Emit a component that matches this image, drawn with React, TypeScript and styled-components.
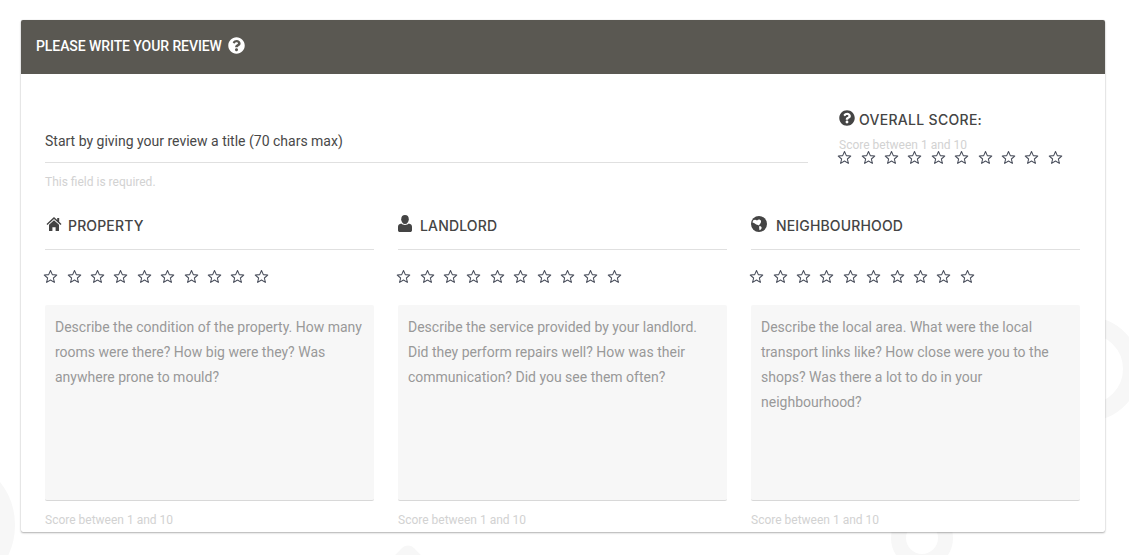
import React from 'react';
import styled, { createGlobalStyle } from 'styled-components';
import { FaQuestionCircle } from 'react-icons/fa';

const GlobalStyle = createGlobalStyle`
  html, body {
    margin: 0;
    padding: 0;
    background: #fff;
  }
  body {
    font-family: Roboto, "Liberation Sans", sans-serif;
    overflow: hidden;
  }
`;

const HomeIcon = () => (
  <svg width="16" height="14" viewBox="0 0 16 14" fill="#444">
    <path d="M8 0L.5 6.900l.9 1L8 1.900l6.600 6 .9-1L13.200 4.800V1h-2v1.900z" />
    <path d="M8 3.200l5 4.500V14H9.600v-3.800H6.400V14H3V7.700z" />
  </svg>
);

const UserIcon = () => (
  <svg width="14" height="17" viewBox="0 0 14 17" fill="#444">
    <path d="M7 0c2.400 0 3.800 1.600 3.800 4.200S9.300 9 7 9 3.200 6.800 3.200 4.200 4.600 0 7 0z" />
    <path d="M3.300 8.600C4.300 9.600 5.500 10 7 10s2.700-.4 3.700-1.400c2 .4 3.300 1.300 3.300 3.200v3.400c0 1-.8 1.800-1.800 1.800H1.800C.8 17 0 16.200 0 15.200v-3.400c0-1.900 1.300-2.800 3.300-3.200z" />
  </svg>
);

const GlobeIcon = () => (
  <svg width="16" height="16" viewBox="0 0 16 16">
    <circle cx="8" cy="8" r="8" fill="#444" />
    <path
      d="M2 4.500C3.500 3.500 5 3.800 6 4.500 7.500 3 9.500 3.500 10 5c.5 2-1.500 3-2 4.500C6.500 8.800 5.500 9 4.500 8c-1-1-2-1-3-1.500zM8.500 10c1.500 0 2.500 1 2 2.500-.5 1-1.500 2-2 1.500-.5-1 0-2-.5-3z"
      fill="#fff"
    />
  </svg>
);

const sections = [
  {
    key: 'property',
    title: 'PROPERTY',
    icon: <HomeIcon />,
    gap: 6,
    indent: 1,
    text: 'Describe the condition of the property. How many rooms were there? How big were they? Was anywhere prone to mould?',
  },
  {
    key: 'landlord',
    title: 'LANDLORD',
    icon: <UserIcon />,
    gap: 8,
    indent: 0,
    text: 'Describe the service provided by your landlord. Did they perform repairs well? How was their communication? Did you see them often?',
  },
  {
    key: 'neighbourhood',
    title: 'NEIGHBOURHOOD',
    icon: <GlobeIcon />,
    gap: 9,
    indent: 0,
    text: 'Describe the local area. What were the local transport links like? How close were you to the shops? Was there a lot to do in your neighbourhood?',
  },
];

const Stars = () => (
  <StarRow>
    {Array.from({ length: 10 }, (_, i) => (
      <svg key={i} width="15" height="15" viewBox="0 0 24 24">
        <path
          d="M12 2.500l2.900 6.500 7.100.7-5.400 4.700 1.600 7-6.200-3.700-6.200 3.700 1.600-7L2 9.700 9.100 9z"
          fill="none"
          stroke="#4a4f5c"
          strokeWidth="1.700"
          strokeLinejoin="round"
        />
      </svg>
    ))}
  </StarRow>
);

export default function App() {
  return (
    <Page>
      <GlobalStyle />
      <Ring $size={104} $width={17} $left={1036} $top={317} />
      <Ring $size={62} $width={15} $left={891} $top={507} />
      <Ring $size={138} $width={40} $left={-123} $top={456} />
      <Blob />
      <Card>
        <Header>
          PLEASE WRITE YOUR REVIEW
          <FaQuestionCircle size={17} />
        </Header>
        <Body>
          <TopRow>
            <TitleField>
              <TitleInput>Start by giving your review a title (70 chars max)</TitleInput>
              <Hint>This field is required.</Hint>
            </TitleField>
            <Overall>
              <OverallHeading>
                <FaQuestionCircle size={16} />
                OVERALL SCORE:
              </OverallHeading>
              <OverallHint>Score between 1 and 10</OverallHint>
              <Stars />
            </Overall>
          </TopRow>
          <Columns>
            {sections.map((s) => (
              <Column key={s.key}>
                <SectionHeading $gap={s.gap} $indent={s.indent}>
                  {s.icon}
                  {s.title}
                </SectionHeading>
                <Stars />
                <TextBox>{s.text}</TextBox>
                <Hint>Score between 1 and 10</Hint>
              </Column>
            ))}
          </Columns>
        </Body>
      </Card>
    </Page>
  );
}

const Page = styled.div`
  position: relative;
  width: 1129px;
  height: 555px;
  padding: 20px 24px 0 21px;
  box-sizing: border-box;
  overflow: hidden;
  background: #fff;
`;

const Ring = styled.div<{ $size: number; $width: number; $left: number; $top: number }>`
  position: absolute;
  left: ${(p) => p.$left}px;
  top: ${(p) => p.$top}px;
  width: ${(p) => p.$size}px;
  height: ${(p) => p.$size}px;
  box-sizing: border-box;
  border: ${(p) => p.$width}px solid #f7f7f7;
  border-radius: 50%;
`;

const Blob = styled.div`
  position: absolute;
  left: 394px;
  top: 548px;
  width: 28px;
  height: 28px;
  background: #f7f7f7;
  border-radius: 8px;
  transform: rotate(45deg);
`;

const Card = styled.div`
  position: relative;
  height: 512px;
  background: #fff;
  border-radius: 2px;
  box-shadow: 0 1px 2px rgba(0, 0, 0, 0.3), 0 0 1px rgba(0, 0, 0, 0.2);
  overflow: hidden;
`;

const Header = styled.div`
  height: 51px;
  padding: 0 0 3px 15px;
  display: flex;
  align-items: center;
  gap: 6px;
  background: #5a5852;
  color: #fff;
  font-size: 14px;
  font-weight: 500;
  letter-spacing: -0.08px;
`;

const Body = styled.div`
  padding: 0 25px 0 24px;
`;

const TopRow = styled.div`
  display: flex;
  justify-content: space-between;
  height: 131px;
`;

const TitleField = styled.div`
  width: 763px;
  padding-top: 58px;
`;

const TitleInput = styled.div`
  height: 30px;
  line-height: 19px;
  border-bottom: 1px solid #e0e0e0;
  color: #484848;
  font-size: 14px;
  font-weight: 400;
`;

const Hint = styled.div`
  margin-top: 12px;
  color: #d2d2d2;
  font-size: 12px;
  line-height: 14px;
`;

const Overall = styled.div`
  width: 241px;
  padding-top: 35px;
`;

const OverallHeading = styled.div`
  display: flex;
  align-items: center;
  gap: 4px;
  height: 20px;
  color: #444;
  font-family: Inter, "Noto Sans", sans-serif;
  font-size: 14px;
  font-weight: 500;
  letter-spacing: 0.3px;

  svg {
    margin-top: -2px;
  }
`;

const OverallHint = styled.div`
  margin-top: 9px;
  height: 12px;
  color: #d2d2d2;
  font-size: 12px;
  line-height: 14px;
`;

const StarRow = styled.div`
  display: flex;
  gap: 8.4px;
  margin-left: -1.8px;
`;

const Columns = styled.div`
  display: grid;
  grid-template-columns: repeat(3, 329px);
  gap: 24px;
`;

const Column = styled.div`
  display: flex;
  flex-direction: column;
`;

const SectionHeading = styled.div<{ $gap: number; $indent: number }>`
  display: flex;
  align-items: center;
  gap: ${(p) => p.$gap}px;
  height: 40px;
  padding: 0 0 4px ${(p) => p.$indent}px;
  margin-bottom: 19px;
  border-bottom: 1px solid #e0e0e0;
  color: #444;
  font-family: Inter, "Noto Sans", sans-serif;
  font-size: 14px;
  font-weight: 500;
  letter-spacing: 0.15px;

  svg {
    flex: none;
    margin-top: -3px;
  }
`;

const TextBox = styled.div`
  height: 196px;
  margin-top: 21px;
  padding: 10px;
  box-sizing: border-box;
  background: #f7f7f7;
  border-bottom: 1px solid #d8d8d8;
  border-radius: 2px;
  color: #999;
  font-size: 14px;
  font-weight: 400;
  line-height: 25px;
`;
